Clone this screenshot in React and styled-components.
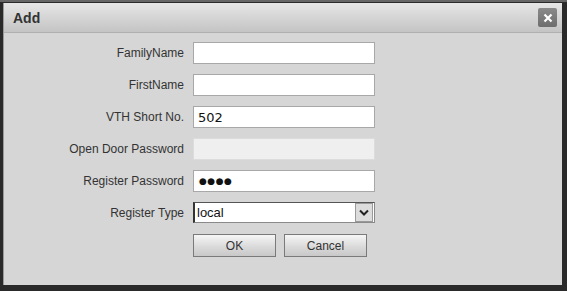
import React from "react";
import styled, { createGlobalStyle } from "styled-components";

const Global = createGlobalStyle`
  html, body { margin: 0; padding: 0; background: #2b2b2b; }
  body { font-family: "Liberation Sans", Arial, sans-serif; }
`;

const Frame = styled.div`
  width: 567px;
  height: 291px;
  box-sizing: border-box;
  background: #2a2a2a;
  border-top: 2px solid #666;
  padding: 1px 5px 6px 3px;
  display: flex;
`;

const Dialog = styled.div`
  flex: 1;
  display: flex;
  flex-direction: column;
  background: #d6d6d6;
  border-left: 1px solid #9a9a9a;
`;

const TitleBar = styled.div`
  height: 29px;
  display: flex;
  align-items: center;
  justify-content: space-between;
  padding: 0 5px 0 9px;
  background: linear-gradient(#e6e6e6, #c4c4c4);
  border-bottom: 1px solid #b0b0b0;
`;

const Title = styled.span`
  font-size: 14px;
  font-weight: bold;
  color: #333;
`;

const Close = styled.div`
  width: 19px;
  height: 19px;
  border-radius: 2px;
  background: linear-gradient(#8a8a8a, #6e6e6e);
  display: flex;
  align-items: center;
  justify-content: center;
`;

const Form = styled.div`
  display: grid;
  grid-template-columns: 180px 182px;
  column-gap: 9px;
  row-gap: 10px;
  padding: 9px 0 0 0;
  align-items: center;
`;

const Label = styled.div`
  text-align: right;
  font-size: 12px;
  color: #333;
`;

const Input = styled.div`
  height: 22px;
  box-sizing: border-box;
  border: 1px solid ${(p) => (p.$disabled ? "#dcdcdc" : "#a8a8a8")};
  background: ${(p) => (p.$disabled ? "#efefef" : "#fff")};
  display: flex;
  align-items: center;
  padding-left: 4px;
  font-family: "DejaVu Sans", Verdana, sans-serif;
  font-size: 13px;
  color: #111;
`;

const Dots = styled.span`
  font-size: 9px;
  letter-spacing: 0.5px;
  padding-left: 1px;
`;

const Select = styled.div`
  height: 21px;
  box-sizing: border-box;
  border: 1px solid #8a8a8a;
  border-left: 2px solid #333;
  border-top: 1px solid #555;
  background: #fff;
  display: flex;
  align-items: center;
  font-size: 13px;
  color: #111;
`;

const SelectText = styled.span`
  flex: 1;
  padding-left: 2px;
`;

const Arrow = styled.div`
  width: 16px;
  height: 17px;
  margin-right: 1px;
  background: #dcdcdc;
  border: 1px solid #9a9a9a;
  display: flex;
  align-items: center;
  justify-content: center;
`;

const Buttons = styled.div`
  grid-column: 2;
  display: flex;
  gap: 8px;
  margin-top: 1px;
`;

const Button = styled.div`
  width: 83px;
  height: 23px;
  box-sizing: border-box;
  border: 1px solid #7a7a7a;
  background: linear-gradient(#f6f6f6, #d8d8d8 60%, #c8c8c8);
  display: flex;
  align-items: center;
  justify-content: center;
  font-size: 12px;
  color: #333;
`;

export default function App() {
  return (
    <>
      <Global />
      <Frame>
        <Dialog>
          <TitleBar>
            <Title>Add</Title>
            <Close>
              <svg width="10" height="10" viewBox="0 0 10 10">
                <path d="M1.5 1.5 L8.5 8.5 M8.5 1.5 L1.5 8.5" stroke="#fff" strokeWidth="2.2" />
              </svg>
            </Close>
          </TitleBar>
          <Form>
            <Label>FamilyName</Label>
            <Input />
            <Label>FirstName</Label>
            <Input />
            <Label>VTH Short No.</Label>
            <Input>502</Input>
            <Label>Open Door Password</Label>
            <Input $disabled />
            <Label>Register Password</Label>
            <Input>
              <Dots>●●●●</Dots>
            </Input>
            <Label>Register Type</Label>
            <Select>
              <SelectText>local</SelectText>
              <Arrow>
                <svg width="10" height="7" viewBox="0 0 10 7">
                  <path d="M1 1.5 L5 5.5 L9 1.5" stroke="#222" strokeWidth="2" fill="none" />
                </svg>
              </Arrow>
            </Select>
            <Buttons>
              <Button>OK</Button>
              <Button>Cancel</Button>
            </Buttons>
          </Form>
        </Dialog>
      </Frame>
    </>
  );
}
